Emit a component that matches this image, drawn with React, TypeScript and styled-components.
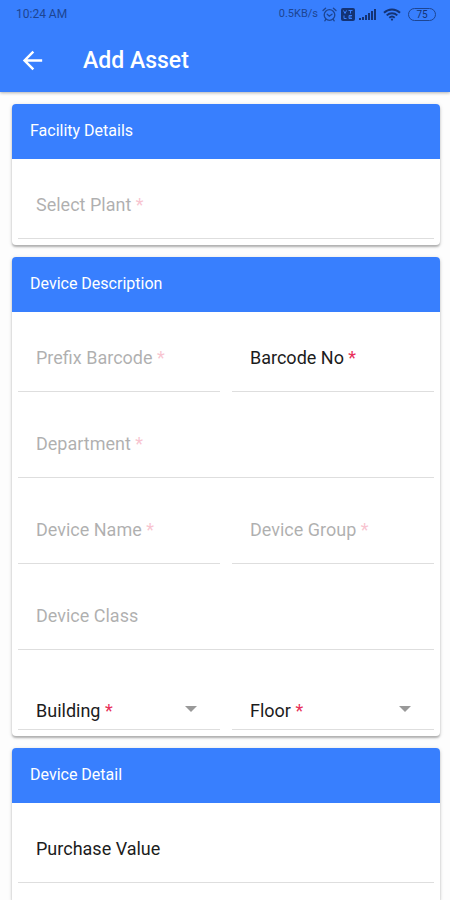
import React, { useId } from "react";
import styled, { createGlobalStyle } from "styled-components";

const GlobalStyle = createGlobalStyle`
  * { box-sizing: border-box; }
  body {
    margin: 0;
    background: #fdfdfd;
    font-family: Roboto, "Liberation Sans", sans-serif;
  }
`;

const Page = styled.div`
  display: flex;
  flex-direction: column;
  min-height: 100vh;
`;

const TopBar = styled.header`
  background: #387ffe;
  box-shadow: 0 1px 3px rgba(0, 0, 0, 0.3);
`;

const StatusBar = styled.div`
  display: flex;
  align-items: center;
  justify-content: space-between;
  height: 28px;
  padding: 0 14px 0 16px;
  color: #1d4592;
  font-size: 12px;
  line-height: 16px;
`;

const StatusGroup = styled.div`
  display: flex;
  align-items: center;
  gap: 4px;
`;

const Speed = styled.span`
  font-size: 11px;
`;

const IconGroup = styled.div`
  display: flex;
  align-items: center;
  gap: 4px;
  margin-right: 3px;
`;

const Toolbar = styled.div`
  display: flex;
  align-items: center;
  gap: 36px;
  height: 64px;
  padding: 0 18px;
`;

const BackButton = styled.button`
  display: flex;
  padding: 0;
  border: 0;
  background: none;
  color: #fff;
  cursor: pointer;
`;

const Title = styled.h1`
  margin: 0;
  padding-top: 2px;
  color: #fff;
  font-size: 23px;
  font-weight: 500;
  line-height: 32px;
`;

const Content = styled.main`
  display: flex;
  flex: 1;
  flex-direction: column;
  gap: 12px;
  padding: 12px 10px 0 12px;
`;

const Card = styled.section<{ $fill?: boolean }>`
  flex: ${(p) => (p.$fill ? "1" : "none")};
  overflow: hidden;
  border-radius: ${(p) => (p.$fill ? "4px 4px 0 0" : "4px")};
  background: #fff;
  box-shadow: 0 2px 2px rgba(0, 0, 0, 0.24), 0 1px 4px rgba(0, 0, 0, 0.14);
`;

const CardTitle = styled.h2`
  margin: 0;
  padding: 15px 18px 16px;
  background: #387ffe;
  color: #fff;
  font-size: 16px;
  font-weight: 400;
  line-height: 24px;
`;

const Fields = styled.div`
  display: grid;
  grid-template-columns: 1fr 1fr;
  gap: 6px 12px;
  padding: 0 6px 6px;
`;

const FieldBox = styled.div<{ $wide?: boolean; $compact?: boolean }>`
  display: grid;
  grid-column: ${(p) => (p.$wide ? "1 / -1" : "auto")};
  align-items: center;
  min-width: 0;
  height: ${(p) => (p.$compact ? "74px" : "80px")};
  padding: ${(p) => (p.$compact ? "36px 18px 0" : "12px 18px 0")};
  border-bottom: 1px solid #dedede;
`;

const FieldLabel = styled.label<{ $muted?: boolean }>`
  grid-area: 1 / 1;
  color: #1c1c1c;
  font-size: 18px;
  line-height: 24px;
  opacity: ${(p) => (p.$muted ? 0.35 : 1)};
  pointer-events: none;
`;

const Required = styled.span<{ $muted?: boolean }>`
  color: #e8305a;
  opacity: ${(p) => (p.$muted ? 0.8 : 1)};
`;

const TextInput = styled.input`
  grid-area: 1 / 1;
  width: 100%;
  height: 32px;
  padding: 0;
  border: 0;
  outline: 0;
  background: transparent;
  font: inherit;
`;

const SelectInput = styled.select`
  grid-area: 1 / 1;
  width: 100%;
  height: 32px;
  padding: 0;
  border: 0;
  outline: 0;
  appearance: none;
  background: transparent;
  font: inherit;
`;

const Caret = styled.svg`
  grid-area: 1 / 1;
  align-self: start;
  justify-self: end;
  margin: 14px 5px 0 0;
  pointer-events: none;
`;

type FieldProps = {
  label: string;
  required?: boolean;
  disabled?: boolean;
  wide?: boolean;
  select?: boolean;
};

function Field({ label, required, disabled, wide, select }: FieldProps) {
  const id = useId();
  return (
    <FieldBox $wide={wide} $compact={select}>
      {select ? (
        <SelectInput id={id} required={required} defaultValue="">
          <option value="" />
        </SelectInput>
      ) : (
        <TextInput id={id} type="text" required={required} disabled={disabled} />
      )}
      <FieldLabel htmlFor={id} $muted={disabled}>
        {label}
        {required && <Required $muted={disabled}> *</Required>}
      </FieldLabel>
      {select && (
        <Caret width="12" height="6" viewBox="0 0 12 6" aria-hidden="true">
          <path d="M0 0h12L6 6z" fill="#999" />
        </Caret>
      )}
    </FieldBox>
  );
}

const AlarmIcon = () => (
  <svg width="15" height="15" viewBox="0 0 15 15" fill="none" stroke="currentColor" strokeWidth="1.3" strokeLinecap="round">
    <circle cx="7.5" cy="8" r="5.3" />
    <path d="M1 3.6 3.6 1.2M14 3.6 11.4 1.2M5.2 7.2 7.3 9.2 10 7.2M3.8 12.4 2.8 13.8M11.2 12.4l1 1.4" />
  </svg>
);

const VolteIcon = () => (
  <svg width="14" height="13" viewBox="0 0 14 13">
    <rect width="14" height="13" rx="2" fill="#143374" />
    <path d="M2.5 2.5 4 5.5 5.5 2.5M7.5 2.5h4M9.5 2.5v3M3 7.5v3h2.5M11 7.5H8v3h3M8 9h2.5" fill="none" stroke="#387ffe" />
  </svg>
);

const SignalIcon = () => (
  <svg width="17" height="13" viewBox="0 0 17 13" fill="#143374">
    <rect x="0" y="10" width="2" height="2" />
    <rect x="3" y="9" width="2" height="3" />
    <rect x="6" y="7" width="2" height="5" />
    <rect x="9" y="5" width="2" height="7" />
    <rect x="12" y="3" width="2" height="9" />
    <rect x="15" y="1" width="2" height="11" />
  </svg>
);

const WifiIcon = () => (
  <svg width="18" height="13" viewBox="0 0 18 13" fill="none" stroke="#143374" strokeWidth="1.9">
    <path d="M1 4.8a11.5 11.5 0 0 1 16 0M3.7 7.4a7.6 7.6 0 0 1 10.6 0M6.3 9.8a4 4 0 0 1 5.4 0" />
    <circle cx="9" cy="11.6" r="1.1" fill="#143374" stroke="none" />
  </svg>
);

const Battery = styled.span`
  display: flex;
  align-items: center;
  justify-content: center;
  width: 28px;
  height: 13px;
  margin-left: 3px;
  border: 1px solid #1d4592;
  border-radius: 7px;
  color: #143374;
  font-size: 10px;
  line-height: 11px;
`;

export default function App() {
  return (
    <>
      <GlobalStyle />
      <Page>
        <TopBar>
          <StatusBar>
            <span>10:24 AM</span>
            <StatusGroup>
              <IconGroup>
                <Speed>0.5KB/s</Speed>
                <AlarmIcon />
                <VolteIcon />
                <SignalIcon />
              </IconGroup>
              <WifiIcon />
              <Battery>75</Battery>
            </StatusGroup>
          </StatusBar>
          <Toolbar>
            <BackButton type="button" aria-label="Back">
              <svg width="29" height="29" viewBox="0 0 24 24" fill="currentColor">
                <path d="M20 11H7.83l5.59-5.59L12 4l-8 8 8 8 1.41-1.41L7.83 13H20v-2z" />
              </svg>
            </BackButton>
            <Title>Add Asset</Title>
          </Toolbar>
        </TopBar>
        <Content>
          <Card>
            <CardTitle>Facility Details</CardTitle>
            <Fields>
              <Field label="Select Plant" required disabled wide />
            </Fields>
          </Card>
          <Card>
            <CardTitle>Device Description</CardTitle>
            <Fields>
              <Field label="Prefix Barcode" required disabled />
              <Field label="Barcode No" required />
              <Field label="Department" required disabled wide />
              <Field label="Device Name" required disabled />
              <Field label="Device Group" required disabled />
              <Field label="Device Class" disabled wide />
              <Field label="Building" required select />
              <Field label="Floor" required select />
            </Fields>
          </Card>
          <Card $fill>
            <CardTitle>Device Detail</CardTitle>
            <Fields>
              <Field label="Purchase Value" wide />
            </Fields>
          </Card>
        </Content>
      </Page>
    </>
  );
}
